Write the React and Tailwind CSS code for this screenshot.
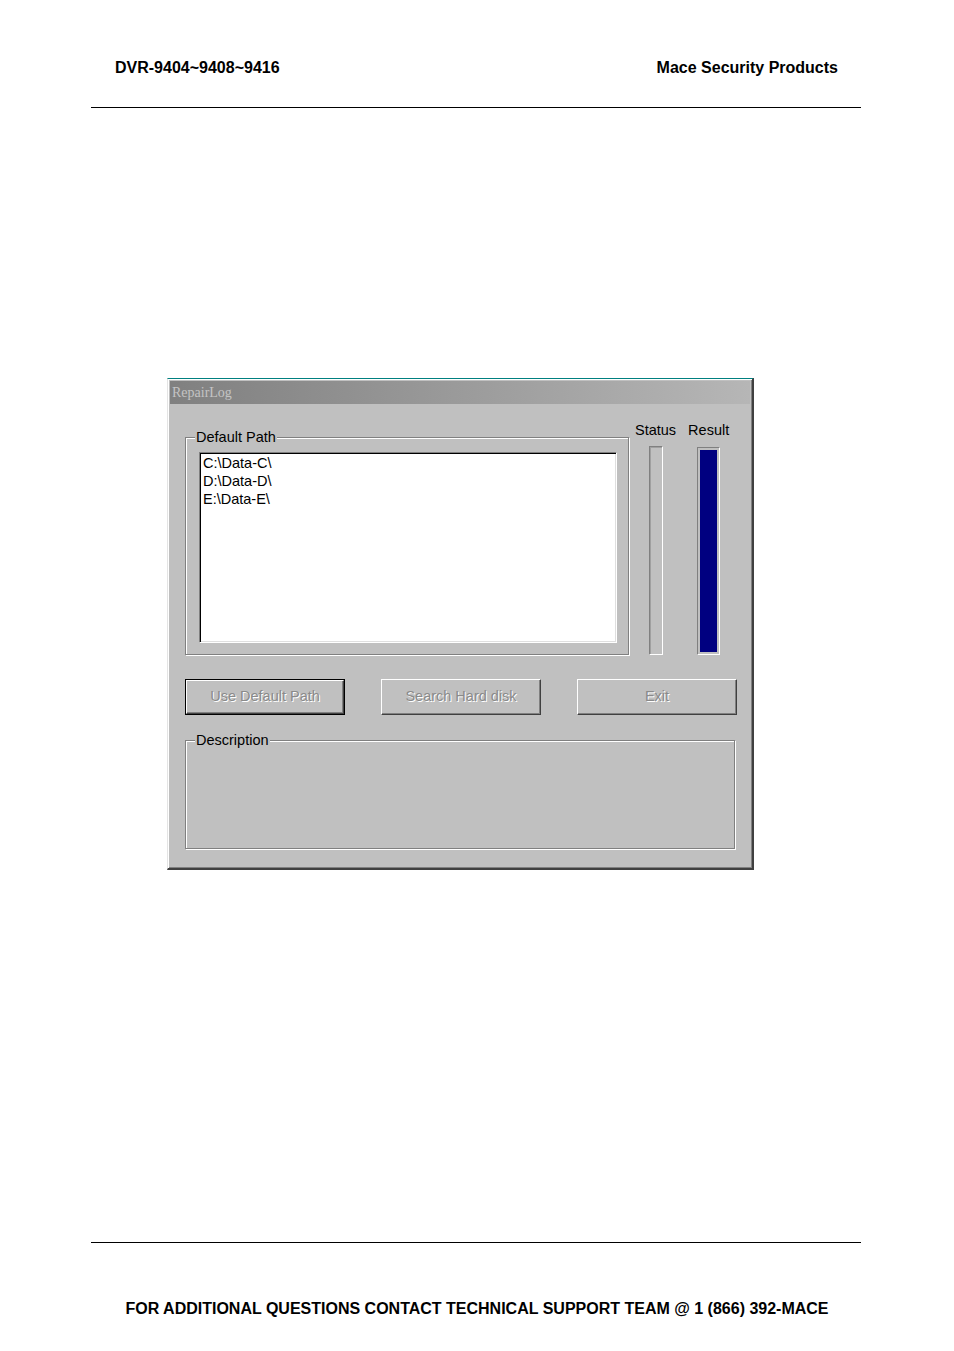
import React from 'react';

const sans = { fontFamily: '"Liberation Sans", Arial, sans-serif' };

function GroupBox({ label, className = '', children }) {
  return (
    <div
      className={`relative border border-[#808080] shadow-[inset_1px_1px_0_#fff,1px_1px_0_#fff] ${className}`}
    >
      <span className="absolute left-[9px] -top-[9px] bg-[#c0c0c0] px-[1px] text-[14.5px] leading-[17px] text-black">
        {label}
      </span>
      {children}
    </div>
  );
}

function WinButton({ children, isDefault }) {
  const inner = (
    <div className="h-full w-full flex items-center justify-center border border-t-white border-l-white border-r-[#404040] border-b-[#404040] shadow-[inset_-1px_-1px_0_#808080] text-[14.5px] text-[#8a8a8a] [text-shadow:1px_1px_0_#fff]">
      {children}
    </div>
  );
  return (
    <div className={`w-[160px] h-[36px] ${isDefault ? 'border border-black' : ''}`}>
      {inner}
    </div>
  );
}

function RepairLogWindow() {
  return (
    <div className="w-[587px] h-[492px] bg-[#c0c0c0] border-t border-t-[#008080] border-l border-l-[#e4e4e4] border-r-2 border-r-[#404040] border-b-2 border-b-[#404040] shadow-[inset_1px_1px_0_#fff,inset_-1px_-1px_0_#808080] flex flex-col">
      <div className="mt-[2px] mx-[2px] h-[23px] bg-gradient-to-r from-[#808080] to-[#b6b6b6] flex items-center pl-[2px]">
        <span
          className="text-[14px] text-[#c4c4c4]"
          style={{ fontFamily: '"Liberation Serif", "Times New Roman", serif' }}
        >
          RepairLog
        </span>
      </div>

      <div className="pl-[17px] pt-[17px]">
        <div className="flex items-start">
          <GroupBox label="Default Path" className="mt-[16px] w-[444px] h-[218px]">
            <div className="mt-[14px] ml-[13px] w-[418px] h-[191px] bg-white border border-t-[#808080] border-l-[#808080] border-r-white border-b-white shadow-[inset_1px_1px_0_#000,inset_-1px_-1px_0_#dfdfdf] pl-[3px] pt-[1px] text-[14.5px] leading-[18px] text-black">
              <div>C:\Data-C\</div>
              <div>D:\Data-D\</div>
              <div>E:\Data-E\</div>
            </div>
          </GroupBox>

          <div className="ml-[6px] pt-[1px] flex gap-[12px]">
            <div className="flex flex-col items-center">
              <span className="text-[14.5px] leading-[17px] text-black">Status</span>
              <div className="mt-[7px] w-[14px] h-[209px] border border-t-[#808080] border-l-[#808080] border-r-white border-b-white shadow-[inset_1px_1px_0_#a0a0a0]" />
            </div>
            <div className="flex flex-col items-center">
              <span className="text-[14.5px] leading-[17px] text-black">Result</span>
              <div className="mt-[8px] w-[23px] h-[208px] border border-t-[#808080] border-l-[#808080] border-r-white border-b-white p-[2px]">
                <div className="w-full h-full bg-[#000080]" />
              </div>
            </div>
          </div>
        </div>

        <div className="mt-[24px] flex gap-[36px]">
          <WinButton isDefault>Use Default Path</WinButton>
          <WinButton>Search Hard disk</WinButton>
          <WinButton>Exit</WinButton>
        </div>

        <GroupBox label="Description" className="mt-[25px] w-[550px] h-[109px]" />
      </div>
    </div>
  );
}

export default function App() {
  return (
    <div className="w-[954px] h-[1351px] bg-white flex flex-col" style={sans}>
      <div className="pt-[59px] pl-[115px] pr-[116px] flex justify-between text-[16px] leading-[18px] font-bold text-black">
        <span>DVR-9404~9408~9416</span>
        <span>Mace Security Products</span>
      </div>
      <div className="mt-[30px] ml-[91px] mr-[93px] border-t border-black" />

      <div className="mt-[270px] ml-[167px]">
        <RepairLogWindow />
      </div>

      <div className="mt-[372px] ml-[91px] mr-[93px] border-t border-black" />
      <div className="mt-[57px] text-center text-[16px] leading-[18px] font-bold text-black">
        FOR ADDITIONAL QUESTIONS CONTACT TECHNICAL SUPPORT TEAM @ 1 (866) 392-MACE
      </div>
    </div>
  );
}
